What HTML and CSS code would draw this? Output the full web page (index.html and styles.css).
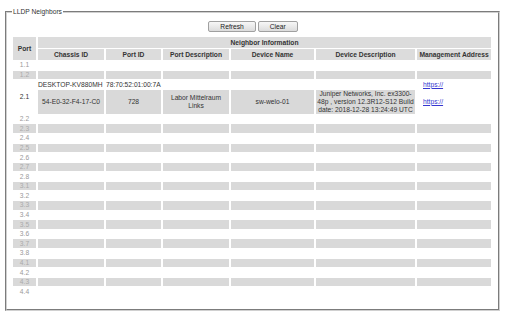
FILE: index.html
```html
<!DOCTYPE html>
<html lang="en">
<head>
    <meta charset="UTF-8">
    <title>LLDP Neighbors</title>
    <link rel="stylesheet" href="styles.css">
</head>
<body>
    <fieldset class="panel">
        <legend>LLDP Neighbors</legend>
        <div class="actions">
            <button type="button" class="btn">Refresh</button>
            <button type="button" class="btn">Clear</button>
        </div>
        <table class="lldp">
            <colgroup>
                <col class="c-port">
                <col class="c-chassis">
                <col class="c-portid">
                <col class="c-portdesc">
                <col class="c-name">
                <col class="c-desc">
                <col class="c-mgmt">
            </colgroup>
            <thead>
                <tr>
                    <th rowspan="2">Port</th>
                    <th colspan="6">Neighbor Information</th>
                </tr>
                <tr>
                    <th>Chassis ID</th>
                    <th>Port ID</th>
                    <th>Port Description</th>
                    <th>Device Name</th>
                    <th>Device Description</th>
                    <th>Management Address</th>
                </tr>
            </thead>
            <tbody>
                <tr><td class="port">1.1</td><td></td><td></td><td></td><td></td><td></td><td></td></tr>
                <tr class="alt"><td class="port">1.2</td><td></td><td></td><td></td><td></td><td></td><td></td></tr>
                <tr>
                    <td class="port active" rowspan="2">2.1</td>
                    <td class="left">DESKTOP-KV880MH</td>
                    <td class="left">78:70:52:01:00:7A</td>
                    <td></td><td></td><td></td>
                    <td class="mgmt"><a href="#">https://</a></td>
                </tr>
                <tr class="alt">
                    <td>54-E0-32-F4-17-C0</td>
                    <td>728</td>
                    <td>Labor Mittelraum Links</td>
                    <td>sw-welo-01</td>
                    <td>Juniper Networks, Inc. ex3300-<br>48p , version 12.3R12-S12 Build<br>date: 2018-12-28 13:24:49 UTC</td>
                    <td class="mgmt"><a href="#">https://</a></td>
                </tr>
                <tr><td class="port">2.2</td><td></td><td></td><td></td><td></td><td></td><td></td></tr>
                <tr class="alt"><td class="port">2.3</td><td></td><td></td><td></td><td></td><td></td><td></td></tr>
                <tr><td class="port">2.4</td><td></td><td></td><td></td><td></td><td></td><td></td></tr>
                <tr class="alt"><td class="port">2.5</td><td></td><td></td><td></td><td></td><td></td><td></td></tr>
                <tr><td class="port">2.6</td><td></td><td></td><td></td><td></td><td></td><td></td></tr>
                <tr class="alt"><td class="port">2.7</td><td></td><td></td><td></td><td></td><td></td><td></td></tr>
                <tr><td class="port">2.8</td><td></td><td></td><td></td><td></td><td></td><td></td></tr>
                <tr class="alt"><td class="port">3.1</td><td></td><td></td><td></td><td></td><td></td><td></td></tr>
                <tr><td class="port">3.2</td><td></td><td></td><td></td><td></td><td></td><td></td></tr>
                <tr class="alt"><td class="port">3.3</td><td></td><td></td><td></td><td></td><td></td><td></td></tr>
                <tr><td class="port">3.4</td><td></td><td></td><td></td><td></td><td></td><td></td></tr>
                <tr class="alt"><td class="port">3.5</td><td></td><td></td><td></td><td></td><td></td><td></td></tr>
                <tr><td class="port">3.6</td><td></td><td></td><td></td><td></td><td></td><td></td></tr>
                <tr class="alt"><td class="port">3.7</td><td></td><td></td><td></td><td></td><td></td><td></td></tr>
                <tr><td class="port">3.8</td><td></td><td></td><td></td><td></td><td></td><td></td></tr>
                <tr class="alt"><td class="port">4.1</td><td></td><td></td><td></td><td></td><td></td><td></td></tr>
                <tr><td class="port">4.2</td><td></td><td></td><td></td><td></td><td></td><td></td></tr>
                <tr class="alt"><td class="port">4.3</td><td></td><td></td><td></td><td></td><td></td><td></td></tr>
                <tr><td class="port">4.4</td><td></td><td></td><td></td><td></td><td></td><td></td></tr>
            </tbody>
        </table>
    </fieldset>
</body>
</html>
```

FILE: styles.css
```css
* {
    box-sizing: border-box;
}

body {
    margin: 0;
    background: #fff;
    font-family: "Liberation Sans", Arial, sans-serif;
    font-size: 6.7px;
    color: #333;
}

.panel {
    width: 493px;
    margin: 8px 0 0 5px;
    padding: 6px 5px 12px 6px;
    border: 2px groove #d0d0d0;
}

legend {
    padding: 0 1px;
    margin-left: -1px;
    color: #333;
}

.actions {
    display: flex;
    justify-content: center;
    gap: 2px;
    margin-bottom: 4px;
}

.btn {
    height: 11px;
    padding: 0 11px;
    font: inherit;
    line-height: 9px;
    color: #222;
    background: linear-gradient(#f7f7f7, #dcdcdc);
    border: 1px solid #a0a0a0;
    border-radius: 2px;
    cursor: pointer;
}

.lldp {
    width: 482px;
    margin-left: -2px;
    border-spacing: 2px 1px;
    table-layout: fixed;
}

.c-port { width: 23px; }
.c-chassis { width: 66px; }
.c-portid { width: 55px; }
.c-portdesc { width: 66px; }
.c-name { width: 83px; }
.c-desc { width: 99px; }
.c-mgmt { width: 74px; }

.lldp th {
    padding: 1.65px 0;
    line-height: 7.7px;
    font-weight: bold;
    background: #dcdcdc;
    color: #333;
}

.lldp td {
    height: 8.6px;
    padding: 0.3px 0;
    line-height: 7.8px;
    text-align: center;
    vertical-align: middle;
    white-space: nowrap;
}

.lldp tr.alt td {
    background: #d9d9d9;
    white-space: normal;
}

.lldp td.port {
    color: #999;
}

.lldp tr.alt td.port {
    color: #aaa;
}

.lldp td.active {
    color: #333;
    background: #fff;
}

.lldp td.left {
    text-align: left;
}

.lldp td.mgmt,
.lldp tr.alt td.mgmt {
    padding-left: 6px;
    text-align: left;
    background: #fff;
}

.mgmt a {
    color: #3636d0;
    text-decoration: underline;
}
```
